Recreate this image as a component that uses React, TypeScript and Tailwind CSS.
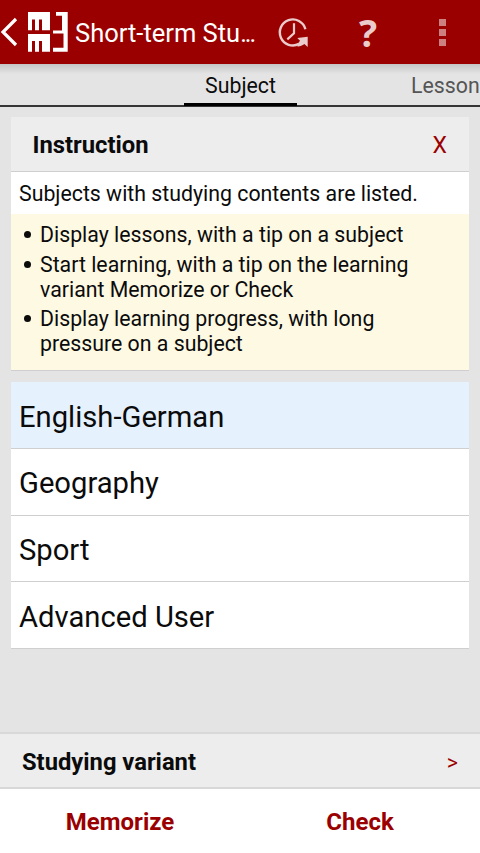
import type { ReactNode } from 'react';

const subjects = ['English-German', 'Geography', 'Sport', 'Advanced User'];

const tips: ReactNode[] = [
    'Display lessons, with a tip on a subject',
    <>Start learning, with a tip on the learning<br />variant Memorize or Check</>,
    <>Display learning progress, with long<br />pressure on a subject</>,
];

const BackArrow = () => (
    <svg className="w-[18px] h-8 shrink-0" viewBox="0 0 18 32" fill="none" stroke="#fff" strokeWidth="3.2">
        <path d="M16 3 L3 16 L16 29" />
    </svg>
);

const Logo = () => (
    <svg className="w-10 h-10 shrink-0" viewBox="0 0 40 40" fill="#fff">
        <path d="M0 0H22V18.3H14V7.5H11V18.3H7V7.5H4V18.3H0Z" />
        <path d="M0 22H22V39.8H14V29H11V39.8H7V29H4V39.8H0Z" />
        <path d="M28 0H39.7V39.8H25V35.8H35.5V21.6H25V18.5H34V3.8H28Z" />
    </svg>
);

const HistoryIcon = () => (
    <svg className="w-8 h-8" viewBox="0 0 32 32" fill="none" stroke="#ebcccc" strokeWidth="2.4">
        <path d="M28.4 12.2 A13 13 0 1 0 22 26.9" />
        <path d="M17 6.3V16.3L10.3 22.4" strokeWidth="2.2" />
        <path d="M20.3 21L30.7 19.7V30L27.4 27.1C25 29 22.5 29.6 20.5 29.4V27.3L23 23.7Z" fill="#ebcccc" stroke="none" />
    </svg>
);

const App = () => {
    return (
        <div className="w-[480px] h-[853px] overflow-hidden flex flex-col bg-[#e4e4e4] text-[#0b0b0b] font-[Roboto,sans-serif]">
            {/* Action bar */}
            <header className="h-16 shrink-0 bg-[#9b0000] flex items-center">
                <BackArrow />
                <div className="ml-[10px]"><Logo /></div>
                <h1 className="ml-[7px] w-[197px] text-[25.5px] leading-8 text-white whitespace-nowrap mt-[2px]">
                    Short-term Stu<span className="tracking-[-2px]">...</span>
                </h1>
                <div className="ml-[5px] mt-[2px]"><HistoryIcon /></div>
                <span className="ml-[49px] w-5 text-center font-['Open_Sans',sans-serif] font-bold text-[38px] leading-10 -mt-px text-[#ebcccc]">?</span>
                <div className="ml-[61px] flex flex-col gap-[3px]">
                    <i className="size-[7px] bg-[#cd8080]" />
                    <i className="size-[7px] bg-[#cd8080]" />
                    <i className="size-[7px] bg-[#cd8080]" />
                </div>
            </header>

            {/* Tabs */}
            <nav className="h-[43px] shrink-0 border-b-2 border-[#353535] bg-linear-to-b from-[#c5c5c5] to-[#e4e4e4] to-[10px] flex text-[21.3px]">
                <div className="ml-[184px] w-[113px] h-[42px] border-b-[3px] border-black text-center leading-[43px]">Subject</div>
                <div className="ml-[114px] leading-[43px] text-[#555]">Lesson</div>
            </nav>

            <main className="flex-1 px-[11px] pt-[10px]">
                <section className="h-[254px] border-b border-[#cfcfcf] bg-[#fef9e3]">
                    <div className="h-[55px] border-b border-[#cfcfcf] bg-[#ededed] flex items-center justify-between pl-[21.5px] pr-[22px] pt-[4px]">
                        <h2 className="font-bold text-[23.8px]">Instruction</h2>
                        <button className="text-[23px] text-[#9b0000]">X</button>
                    </div>
                    <p className="h-[42px] bg-white pl-2 leading-[44px] text-[21.3px] whitespace-nowrap">Subjects with studying contents are listed.</p>
                    <ul className="pt-[8px] text-[21.3px] leading-[25px] space-y-[4.6px]">
                        {tips.map((tip, idx) => (
                            <li key={idx} className="flex whitespace-nowrap">
                                <i className="ml-[13px] mr-[9px] mt-[9px] size-[7px] shrink-0 rounded-full bg-[#0b0b0b]" />
                                <span>{tip}</span>
                            </li>
                        ))}
                    </ul>
                </section>

                <ul className="mt-[11.4px]">
                    {subjects.map((name, idx) => (
                        <li
                            key={name}
                            className={`h-[66.6px] border-b border-[#cfcfcf] pl-2 pt-[5px] flex items-center text-[29.2px] ${idx === 0 ? 'bg-[#e6f1fe]' : 'bg-white'}`}
                        >
                            {name}
                        </li>
                    ))}
                </ul>
            </main>

            {/* Studying variant */}
            <div className="h-[57px] shrink-0 border-y-2 border-[#d8d8d8] bg-[#ededed] flex items-center justify-between pl-[22px] pr-[22px] pt-[4px]">
                <h2 className="font-bold text-[23.75px]">Studying variant</h2>
                <span className="text-[21.3px] text-[#9b0000]">&gt;</span>
            </div>
            <footer className="h-16 shrink-0 bg-white grid grid-cols-2 text-center leading-[66px] font-bold text-[24px] text-[#9b0000]">
                <button>Memorize</button>
                <button>Check</button>
            </footer>
        </div>
    );
};

export default App;
